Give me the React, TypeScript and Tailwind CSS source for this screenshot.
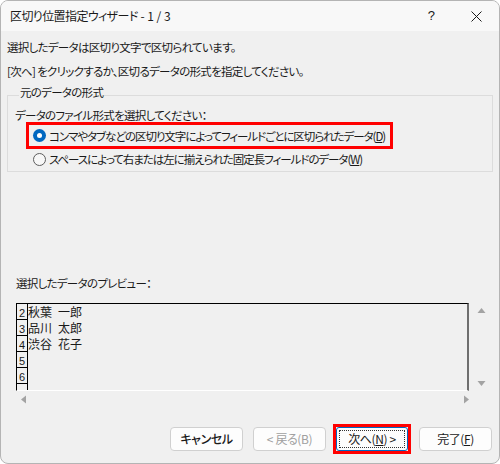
import React from "react";

const jp = "[font-family:'Noto_Sans_CJK_JP','Noto_Sans',sans-serif] [font-feature-settings:'palt']";

function Radio({ checked }: { checked?: boolean }) {
  if (checked) {
    return (
      <span className="flex h-[13px] w-[13px] shrink-0 items-center justify-center rounded-full bg-[#0067c0]">
        <span className="h-[5px] w-[5px] rounded-full bg-white" />
      </span>
    );
  }
  return <span className="h-[13px] w-[13px] shrink-0 rounded-full border border-[#5d5d5d] bg-[#f7f7f7]" />;
}

function Btn({ children, disabled, bold }: { children: React.ReactNode; disabled?: boolean; bold?: boolean }) {
  return (
    <button
      className={`flex h-[24px] w-[73px] items-center justify-center rounded-[4px] border border-[#d0d0d0] bg-[#fdfdfd] text-[12px] tracking-[-0.4px] ${
        disabled ? "text-[#a0a0a0]" : "text-[#1a1a1a]"
      } ${bold ? "font-medium" : ""}`}
    >
      {children}
    </button>
  );
}

function Tri({ dir }: { dir: "up" | "down" | "left" | "right" }) {
  const pts = {
    up: "0,6 4,1 8,6",
    down: "0,1 4,6 8,1",
    left: "6,0 1,4 6,8",
    right: "1,0 6,4 1,8",
  }[dir];
  const vertical = dir === "up" || dir === "down";
  return (
    <svg width={vertical ? 9 : 7} height={vertical ? 7 : 9} viewBox={vertical ? "0 0 8 7" : "0 0 7 8"}>
      <polygon points={pts} fill="#a3a3a3" />
    </svg>
  );
}

// preview rows (fixed-width look: en space between family and given name)
const rows = [
  { n: "2", t: "秋葉\u2002一郎" },
  { n: "3", t: "品川\u2002太郎" },
  { n: "4", t: "渋谷\u2002花子" },
  { n: "5", t: "" },
  { n: "6", t: "" },
  { n: "", t: "" },
];

export default function App() {
  return (
    <div className={`h-[464px] w-[500px] bg-white text-[#1a1a1a] ${jp}`}>
      <div className="flex h-[464px] w-[500px] flex-col overflow-hidden rounded-[8px] border border-[#b4b4b4] bg-[#f0f0f0]">
        {/* Title bar */}
        <div className="flex h-[30px] shrink-0 items-center bg-[#f8f8f8] pl-[9px] text-[12px]">
          <span className="flex-1 whitespace-nowrap">
            <span className="tracking-[-0.6px]">区切り位置指定ウィザード</span> - 1 / 3
          </span>
          <span className="mr-[36px] text-[13px] [font-family:'Liberation_Sans',sans-serif]">?</span>
          <svg width="11" height="11" viewBox="0 0 11 11" className="mr-[17px]">
            <path d="M0.5 0.5 L10.5 10.5 M10.5 0.5 L0.5 10.5" stroke="#1a1a1a" strokeWidth="1" />
          </svg>
        </div>

        {/* Body */}
        <div className="flex flex-1 flex-col px-[6px] pt-[8px] text-[11.5px] tracking-[-0.7px]">
          <p className="h-[16px] whitespace-nowrap leading-[16px]">選択したデータは区切り文字で区切られています。</p>
          <p className="mt-[8px] h-[16px] whitespace-nowrap leading-[16px]">
            [次へ] をクリックするか、区切るデータの形式を指定してください。
          </p>

          <fieldset className="mt-[5px] w-[486px] border border-[#dcdcdc] px-[7px] pb-[2px]">
            <legend className="ml-[4px] px-[1px] pb-[6px] leading-[16px]">元のデータの形式</legend>
            <p className="mt-[2px] h-[14px] whitespace-nowrap leading-[14px]">データのファイル形式を選択してください：</p>
            <div className="ml-[11px] flex h-[27px] w-[367px] items-center gap-[3px] border-[3px] border-[#ff0000] pl-[4px]">
              <Radio checked />
              <span className="whitespace-nowrap leading-[16px] tracking-[-1.05px]">
                コンマやタブなどの区切り文字によってフィールドごとに区切られたデータ(<span className="underline">D</span>)
              </span>
            </div>
            <div className="ml-[18px] flex h-[20px] items-center gap-[3px]">
              <Radio />
              <span className="whitespace-nowrap leading-[16px] tracking-[-1.05px]">
                スペースによって右または左に揃えられた固定長フィールドのデータ(<span className="underline">W</span>)
              </span>
            </div>
          </fieldset>

          <p className="ml-[9px] mt-[103px] h-[16px] whitespace-nowrap leading-[16px]">選択したデータのプレビュー：</p>

          {/* Preview */}
          <div className="mt-[12px] flex tracking-normal">
            <div className="ml-[9px] flex h-[88px] w-[453px] flex-col overflow-hidden border-b border-l border-r-2 border-t border-b-white border-l-black border-r-[#6e6e6e] border-t-black">
              {rows.map((r, i) => (
                <div key={i} className="flex h-[16px] shrink-0 overflow-hidden">
                  <div className="flex h-[16px] w-[11px] shrink-0 items-end justify-center border-b border-r border-black text-[11px] leading-[12px] [font-family:'Liberation_Sans_Narrow','Liberation_Sans',sans-serif]">
                    {r.n}
                  </div>
                  <div className="h-[16px] whitespace-pre text-[12px] leading-[16px] [font-feature-settings:normal]">
                    {r.t}
                  </div>
                </div>
              ))}
            </div>
            <div className="flex h-[88px] w-[22px] flex-col items-center justify-between py-[4px] pl-[2px]">
              <Tri dir="up" />
              <Tri dir="down" />
            </div>
          </div>
          <div className="ml-[13px] flex h-[16px] w-[450px] items-center justify-between">
            <Tri dir="left" />
            <Tri dir="right" />
          </div>

          {/* Buttons */}
          <div className="mt-[17px] flex items-center justify-end pr-[1px]">
            <Btn bold>キャンセル</Btn>
            <div className="ml-[10px]">
              <Btn disabled>&lt;&nbsp;戻る(B)</Btn>
            </div>
            <div className="ml-[7px] border-[3px] border-[#ff0000]">
              <button className="flex h-[24px] w-[72px] items-center justify-center rounded-[3px] border border-[#0067c0] bg-[#fdfdfd] p-[2px] text-[12px] tracking-[-0.4px]">
                <span className="flex h-full w-full items-center justify-center border border-dotted border-[#333]">
                  次へ(<span className="underline">N</span>)&nbsp;&gt;
                </span>
              </button>
            </div>
            <div className="ml-[8px]">
              <Btn>
                完了(<span className="underline">F</span>)
              </Btn>
            </div>
          </div>
        </div>
      </div>
    </div>
  );
}
